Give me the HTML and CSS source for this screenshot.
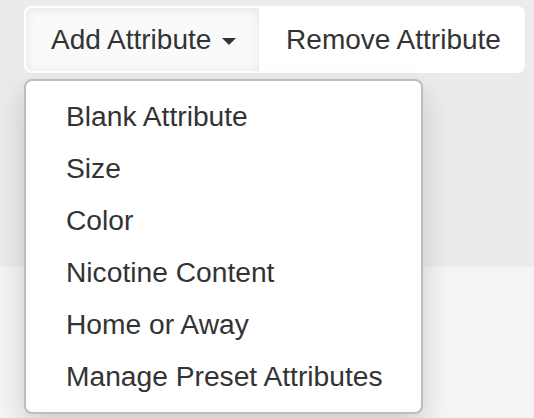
FILE: index.html
```html
<!DOCTYPE html>
<html lang="en">
<head>
  <meta charset="UTF-8" />
  <title>Attributes</title>
  <link rel="stylesheet" href="styles.css">
</head>
<body>

<div class="toolbar">
  <div class="btn-group">
    <div class="dropdown">
      <button class="btn btn-toggle">Add Attribute <span class="caret"></span></button>
      <ul class="dropdown-menu">
        <li>Blank Attribute</li>
        <li>Size</li>
        <li>Color</li>
        <li>Nicotine Content</li>
        <li>Home or Away</li>
        <li>Manage Preset Attributes</li>
      </ul>
    </div>
    <button class="btn btn-remove">Remove Attribute</button>
  </div>
</div>
<div class="content"></div>

</body>
</html>
```
FILE: styles.css
```css
body {
  margin: 0;
  background: #f4f4f4;
  font-family: "Liberation Sans", Arial, sans-serif;
  color: #333;
}

.toolbar {
  position: relative;
  z-index: 2;
  background: #ebebeb;
  height: 267px;
  padding: 6px 0 0 24px;
  box-sizing: border-box;
}

.content {
  height: 151px;
  background: #f4f4f4;
}

.btn-group {
  display: inline-flex;
  background: #fff;
  border-radius: 8px;
}

.dropdown {
  position: relative;
}

.btn {
  font-family: inherit;
  font-size: 28px;
  line-height: 40px;
  color: #333;
  background: transparent;
  border: 2px solid transparent;
  border-radius: 8px;
  padding: 11.5px 23px 11.5px 25px;
  margin: 0;
  cursor: pointer;
}

.btn-remove {
  padding-left: 23px;
  padding-right: 22px;
}

.btn-toggle {
  background: #fafafa;
  border-color: #fff;
  border-radius: 8px 0 0 8px;
  box-shadow: inset 0 2px 12px rgba(0, 0, 0, 0.08);
}

.caret {
  display: inline-block;
  width: 0;
  height: 0;
  margin-left: 3px;
  vertical-align: middle;
  border-top: 7px solid #333;
  border-left: 7.5px solid transparent;
  border-right: 7.5px solid transparent;
}

.dropdown-menu {
  position: absolute;
  z-index: 10;
  top: 100%;
  left: 0;
  width: 399px;
  box-sizing: border-box;
  margin: 6px 0 0;
  padding: 10px 0;
  list-style: none;
  background: #fff;
  border: 2px solid #bdbdbd;
  border-radius: 8px;
  box-shadow: 0 12px 28px rgba(0, 0, 0, 0.16);
}

.dropdown-menu li {
  font-size: 28.2px;
  line-height: 51.9px;
  padding-left: 40px;
  color: #333;
  white-space: nowrap;
}
```
